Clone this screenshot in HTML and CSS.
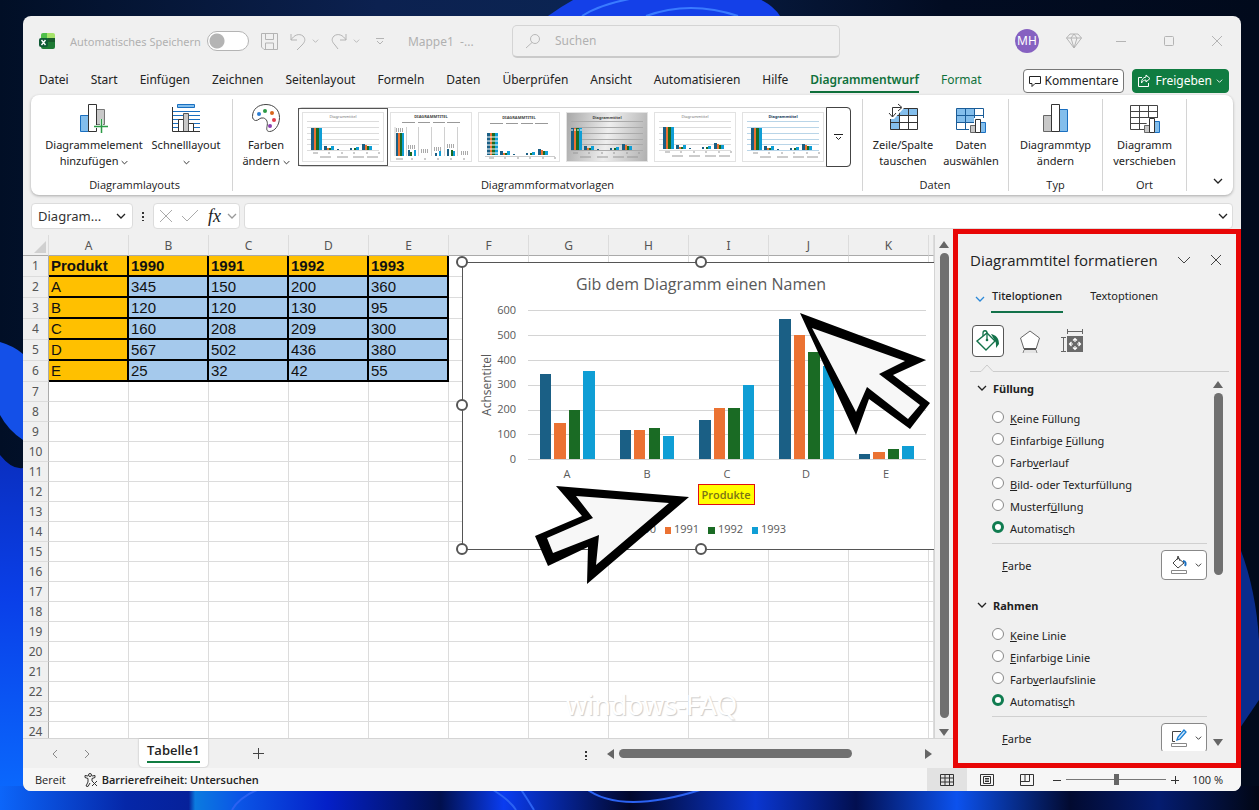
FILE: index.html
```html
<!DOCTYPE html>
<html lang="de">
<head>
	<meta charset="UTF-8">
	<title>Mappe1 - Excel</title>
	<link rel="stylesheet" href="styles.css">
	<script src="script.js" defer></script>
</head>
<body>
	<svg class="wallpaper" viewBox="0 0 1259 810" preserveAspectRatio="none" aria-hidden="true">
		<defs>
			<linearGradient id="sky" x1="0" x2="1">
				<stop offset="0" stop-color="#010f26"/>
				<stop offset=".3" stop-color="#0c2150"/>
				<stop offset=".45" stop-color="#0b2452"/>
				<stop offset=".75" stop-color="#020c22"/>
				<stop offset="1" stop-color="#010a1c"/>
			</linearGradient>
			<linearGradient id="left" x1="0" y1="0" x2="0" y2="1">
				<stop offset="0" stop-color="#0a2fc0"/>
				<stop offset=".4" stop-color="#0a3fe8"/>
				<stop offset="1" stop-color="#0a6cff"/>
			</linearGradient>
			<linearGradient id="floor" x1="0" x2="1">
				<stop offset="0" stop-color="#0c66fa"/>
				<stop offset=".1" stop-color="#0527a8"/>
				<stop offset=".15" stop-color="#06219a"/>
				<stop offset=".155" stop-color="#0b7be0"/>
				<stop offset=".19" stop-color="#0b55e6"/>
				<stop offset=".26" stop-color="#0420c8"/>
				<stop offset=".35" stop-color="#01104e"/>
				<stop offset=".4" stop-color="#0a3cf0"/>
				<stop offset=".5" stop-color="#01072c"/>
				<stop offset=".6" stop-color="#0a36d0"/>
				<stop offset=".68" stop-color="#020f50"/>
				<stop offset=".76" stop-color="#0c52ee"/>
				<stop offset=".85" stop-color="#020a30"/>
				<stop offset=".92" stop-color="#041c70"/>
				<stop offset="1" stop-color="#010614"/>
			</linearGradient>
		</defs>
		<rect width="1259" height="810" fill="url(#sky)"/>
		<path d="M548 16Q570 0 590-8H740Q770 0 780 16Z" fill="#1440e8"/>
		<path d="M582 16Q610-2 670-6M646 16Q690 0 738 16" fill="none" stroke="#3a7bff" stroke-width="2"/>
		<path d="M0 342Q14 346 23 354V440Q8 430 0 415Z" fill="#1450e8"/>
		<path d="M0 455Q12 470 23 468V810H0Z" fill="url(#left)"/>
		<path d="M1240 548Q1256 590 1259 640V700L1240 728Z" fill="#0a2c8c"/>
		<rect y="786" width="1259" height="24" fill="url(#floor)"/>
		<path d="M490 788Q510 800 516 810M520 788Q528 800 534 810M585 788Q620 815 700 790M232 810Q240 796 262 788" fill="none" stroke="#2b62f2" stroke-width="2"/>
	</svg>

	<svg class="sprite" aria-hidden="true">
		<symbol id="chev" viewBox="0 0 10 6"><path d="M1 1l4 4 4-4" fill="none" stroke="currentColor" stroke-width="1.300"/></symbol>
		<symbol id="thumb-bars" viewBox="0 0 80 48">
			<g fill="#1a5f85"><path d="M4 15h3v22H4zM17 33h3v4h-3zM30 36h2v1h-2zM43 35h2v2h-2zM55 31h3v6h-3z"/></g>
			<g fill="#eb7232"><path d="M7 15h2v22H7zM20 35h2v2h-2zM58 32h2v5h-2z"/></g>
			<g fill="#1a6b24"><path d="M9 15h3v22H9zM22 35h2v2h-2zM47 35h2v2h-2zM60 33h2v4h-2z"/></g>
			<g fill="#0f9ed5"><path d="M12 15h3v22h-3zM24 33h3v4h-3zM49 34h3v3h-3zM62 33h3v4h-3z"/></g>
			<path d="M6 40h5M21 40h2M34 40h2M46 40h2M59 40h2M71 40h2M13 44h11M30 44h11M46 44h11M60 44h11" stroke="#999"/>
		</symbol>
		<symbol id="thumb-lines" viewBox="0 0 80 48"><path d="M4 8.500h72M4 14.500h72M4 20.500h72M4 26.500h72M4 31.500h72M4 37.500h72" stroke="currentColor"/></symbol>
	</svg>

	<main class="window">
		<header class="titlebar">
			<div class="title-left">
				<svg class="logo" viewBox="0 0 16 16" width="16" height="16"><path d="M2 2a2 2 0 012-2h5v6H2z" fill="#4fbf4a"/><path d="M8 0h6a2 2 0 012 2v4H8z" fill="#a5e36a"/><path d="M2 5h14v9a2 2 0 01-2 2H4a2 2 0 01-2-2z" fill="#1e7a34"/><path d="M9 5h7v4H9z" fill="#185c2c"/><rect y="5" width="9" height="9" rx="2" fill="#0f5a35"/><path d="M2.500 7l4 5m0-5l-4 5" stroke="#fff" stroke-width="1.400"/></svg>
				<label class="autosave">Automatisches Speichern <input type="checkbox" class="toggle"></label>
				<button class="tool" aria-label="Speichern"><svg viewBox="0 0 17 17" width="17" height="17"><path d="M.5.5h16v16H3l-2.500-2.500zM4.500.5v6h8v-6M4.500 16v-6h8v6"/></svg></button>
				<button class="tool undo" aria-label="Rückgängig"><svg viewBox="0 0 16 17" width="16" height="17"><path d="M1 1v6h6M1 7c3-5 8-7 12-4 3 3 2 6-1 9l-5 5"/></svg><svg class="c" width="7" height="4"><use href="#chev"/></svg></button>
				<button class="tool undo" aria-label="Wiederholen"><svg viewBox="0 0 16 17" width="16" height="17"><path d="M15 1v6H9M15 7c-3-5-8-7-12-4-3 3-2 6 1 9l3 4"/></svg><svg class="c" width="7" height="4"><use href="#chev"/></svg></button>
				<button class="tool more-tools" aria-label="Symbolleiste anpassen"><svg viewBox="0 0 8 7" width="8" height="7"><path d="M0 .5h8M1 3l3 3 3-3"/></svg></button>
				<span class="doc-name">Mappe1&nbsp; -...</span>
			</div>
			<label class="search">
				<svg viewBox="0 0 16 16" width="16" height="16"><circle cx="10" cy="6" r="4.500"/><path d="M7 9.500L1 15"/></svg>
				<input type="text" placeholder="Suchen" aria-label="Suchen">
			</label>
			<div class="title-right">
				<span class="avatar">MH</span>
				<button class="tool gem" aria-label="Premium"><svg viewBox="0 0 16 16" width="16" height="16"><path d="M4 1h8l3.500 4L8 15 .5 5zM.5 5h15M8 1L5 5l3 10 3-10z"/></svg></button>
				<button class="tool" aria-label="Minimieren"><svg viewBox="0 0 12 12" width="12" height="12"><path d="M1 6.500h10"/></svg></button>
				<button class="tool" aria-label="Maximieren"><svg viewBox="0 0 12 12" width="12" height="12"><rect x="1.500" y="1.500" width="9" height="9" rx="1"/></svg></button>
				<button class="tool" aria-label="Schließen"><svg viewBox="0 0 12 12" width="12" height="12"><path d="M1 1l10 10M11 1L1 11"/></svg></button>
			</div>
		</header>

		<nav class="tabs">
			<a href="#">Datei</a>
			<a href="#">Start</a>
			<a href="#">Einfügen</a>
			<a href="#">Zeichnen</a>
			<a href="#">Seitenlayout</a>
			<a href="#">Formeln</a>
			<a href="#">Daten</a>
			<a href="#">Überprüfen</a>
			<a href="#">Ansicht</a>
			<a href="#">Automatisieren</a>
			<a href="#">Hilfe</a>
			<a href="#" class="active">Diagrammentwurf</a>
			<a href="#" class="context">Format</a>
			<div class="actions">
				<button class="comments"><svg viewBox="0 0 12 12" width="12" height="12"><path d="M.5 1.500h11v7H6l-3 3v-3H.5z"/></svg>Kommentare</button>
				<button class="share"><svg viewBox="0 0 13 13" width="13" height="13"><path d="M4 3.500H.5v9h10V9M8 1l4 3.500L8 8V6C6 6 4.500 7 3.500 9 3.500 5.500 5 3.500 8 3z"/></svg>Freigeben <svg width="7" height="4"><use href="#chev"/></svg></button>
			</div>
		</nav>

		<section class="ribbon">
			<div class="group layouts">
				<div class="buttons">
					<button class="big wide">
						<svg viewBox="0 0 30 30" width="30" height="30"><path d="M1.500 12.500h8v16h-8z" fill="#83beec" stroke="#1a6fc0"/><path d="M17.500 6.500h8v15h-8z" fill="#c8c8c8" stroke="#777"/><path d="M9.500 1.500h8v27h-8z" fill="#fff" stroke="#333"/><path d="M22.500 16v14M15 23.500h14" stroke="#fff" stroke-width="3"/><path d="M22.500 16v14M15 23.500h14" stroke="#2c9a46" stroke-width="1.500"/></svg>
						<span>Diagrammelement</span>
						<span>hinzufügen <svg class="c" width="7" height="5"><use href="#chev"/></svg></span>
					</button>
					<button class="big">
						<svg viewBox="0 0 30 30" width="30" height="30"><path d="M6.500 1.500h17v3h-17z" fill="#83beec" stroke="#1a6fc0"/><path d="M2 8.500h27M2 12.500h27M2 16.500h27M2 20.500h27M2 24.500h27" stroke="#1a6fc0"/><path d="M7.500 16.500h5v12h-5zM17.500 20.500h5v8h-5z" fill="#fff" stroke="#333"/><path d="M12.500 10.500h5v18h-5z" fill="#c8c8c8" stroke="#555"/><path d="M1.500 4v24.500H29" fill="none" stroke="#333"/></svg>
						<span>Schnelllayout</span>
						<span><svg class="c" width="7" height="5"><use href="#chev"/></svg></span>
					</button>
				</div>
				<h2>Diagrammlayouts</h2>
			</div>
			<div class="group styles">
				<div class="buttons">
					<button class="big narrow">
						<svg viewBox="0 0 30 30" width="30" height="30"><path d="M15 1.500c8 0 13.500 5.500 13.500 13 0 8-5 14-10 14-3 0-3-2.500-2.500-5 1-4 0-7.500-3.500-8.500-4-1-5 3-8 2.500-2-.5-3-2-3-4C1.500 6 7.500 1.500 15 1.500z" fill="#fff" stroke="#444"/><circle cx="8" cy="11" r="2" fill="#2b7cd3"/><circle cx="14" cy="8" r="2" fill="#2c9a46"/><circle cx="21" cy="10" r="2" fill="#d8661c"/><circle cx="23" cy="17" r="2" fill="#e03c4c"/><circle cx="19" cy="23" r="2" fill="#8c3fb0"/></svg>
						<span>Farben</span>
						<span>ändern <svg class="c" width="7" height="5"><use href="#chev"/></svg></span>
					</button>
					<div class="gallery">
						<button class="thumb selected" aria-label="Formatvorlage 1"><svg viewBox="0 0 80 48"><use href="#thumb-lines" color="#dcdcdc"/><g transform="translate(4 0)"><use href="#thumb-bars" width="80" height="48"/></g><text x="40" y="5" class="t">Diagrammtitel</text></svg></button>
						<button class="thumb" aria-label="Formatvorlage 2"><svg viewBox="0 0 80 48"><path d="M4 14v29M15.500 14v29M27.500 14v29M40.500 14v29M53.500 14v29M66.500 14v29" stroke="#d0d0d0"/><path d="M6 20v23" stroke="#1a5f85" stroke-width="2"/><path d="M8 20v23" stroke="#eb7232" stroke-width="2"/><path d="M10 20v23" stroke="#1a6b24" stroke-width="2"/><path d="M12 20v23" stroke="#0f9ed5" stroke-width="2"/><path d="M18 37v6M45 40v3M57 36v7" stroke="#1a5f85" stroke-width="2"/><path d="M20 39v4M61 37v6" stroke="#1a6b24" stroke-width="2"/><path d="M24 37v6M49 38v5M63 38v5" stroke="#0f9ed5" stroke-width="2"/><path d="M5 17h8M17 34h8M30 38h8M43 36h8M56 33h8M70 40h7" stroke="#aaa" stroke-width="4" stroke-dasharray="1 1"/><path d="M11 9.500h13M27 9.500h12M42 9.500h12M56 9.500h13M5 46h7M20 46h2M33 46h2M46 46h2M59 46h2M72 46h2" stroke="#999"/><text x="40" y="5" class="t b">DIAGRAMMTITEL</text></svg></button>
						<button class="thumb" aria-label="Formatvorlage 3"><svg viewBox="0 0 80 48"><g transform="translate(4 5)"><use href="#thumb-bars" width="80" height="48"/></g><path d="M7 24h14M7 28h14M7 32h14M7 36h14M7 40h14" stroke="#fff"/><path d="M6 43.500h70" stroke="#ccc"/><path d="M11 10.500h13M27 10.500h12M42 10.500h12M56 10.500h13" stroke="#999"/><text x="40" y="6" class="t b">DIAGRAMMTITEL</text></svg></button>
						<button class="thumb dark" aria-label="Formatvorlage 4"><svg viewBox="0 0 80 48"><use href="#thumb-lines" color="#aaa"/><use href="#thumb-bars"/><path d="M4 17h11" stroke="#fff" stroke-dasharray="2 1"/><text x="40" y="6" class="t b">Diagrammtitel</text></svg></button>
						<button class="thumb" aria-label="Formatvorlage 5"><svg viewBox="0 0 80 48"><use href="#thumb-lines" color="#dcdcdc"/><g transform="translate(4 -1)"><use href="#thumb-bars" width="80" height="48"/></g><text x="40" y="5" class="t">Diagrammtitel</text></svg></button>
						<button class="thumb" aria-label="Formatvorlage 6"><svg viewBox="0 0 80 48"><use href="#thumb-lines" color="#b9d5e8"/><g transform="translate(4 0)"><use href="#thumb-bars" width="80" height="48"/></g><text x="40" y="5" class="t b navy">Diagrammtitel</text></svg></button>
						<button class="gallery-more" aria-label="Weitere"><svg viewBox="0 0 9 7" width="9" height="7"><path d="M0 .5h9M2 3l2.500 2.500L7 3" fill="none" stroke="#222"/></svg></button>
					</div>
				</div>
				<h2>Diagrammformatvorlagen</h2>
			</div>
			<div class="group data-group">
				<div class="buttons">
					<button class="big">
						<svg viewBox="0 0 30 30" width="30" height="30"><path d="M2.500 5.500h27v21h-27z" fill="#fff"/><path d="M2.500 5.500h27v7h-18v14h-9z" fill="#83beec"/><path d="M2.500 5.500h27v21h-27zM11.500 5.500v21M20.500 5.500v21M2.500 12.500h27M2.500 19.500h27" fill="none" stroke="#333"/><path d="M0 0h16v5L6 16H0z" fill="#fff"/><path d="M13 4.500H4.500V14M10 1l4 3.500L10 8M1 10l3.500 4L8 10" fill="none" stroke="#333"/></svg>
						<span>Zeile/Spalte</span>
						<span>tauschen</span>
					</button>
					<button class="big narrow">
						<svg viewBox="0 0 30 30" width="30" height="30"><path d="M.5 5.500h27v21H.5z" fill="#fff"/><path d="M.5 5.500h18v14H.5z" fill="#83beec"/><path d="M.5 5.500h27v21H.5zM9.500 5.500v21M18.500 5.500v21M.5 12.500h27M.5 19.500h27" fill="none" stroke="#1a5c98"/><path d="M13 21h5v-6h12v15H13z" fill="#fff"/><path d="M14.500 22.500h5v7h-5z" fill="#c8c8c8" stroke="#666"/><path d="M24.500 19.500h5v10h-5z" fill="#83beec" stroke="#1a6fc0"/><path d="M19.500 16.500h5v13h-5z" fill="#fff" stroke="#333"/></svg>
						<span>Daten</span>
						<span>auswählen</span>
					</button>
				</div>
				<h2>Daten</h2>
			</div>
			<div class="group type">
				<div class="buttons">
					<button class="big">
						<svg viewBox="0 0 30 30" width="30" height="30"><path d="M2.500 12.500h8v16h-8z" fill="#c8c8c8" stroke="#666"/><path d="M18.500 6.500h8v22h-8z" fill="#83beec" stroke="#1a6fc0"/><path d="M10.500 1.500h8v27h-8z" fill="#fff" stroke="#333"/></svg>
						<span>Diagrammtyp</span>
						<span>ändern</span>
					</button>
				</div>
				<h2>Typ</h2>
			</div>
			<div class="group place">
				<div class="buttons">
					<button class="big">
						<svg viewBox="0 0 30 30" width="30" height="30"><path d="M.5 2.500h27v18L20 26.500H.5zM9.500 2.500v24M18.500 2.500v18M.5 8.500h27M.5 14.500h27M.5 20.500h18" fill="#fff" stroke="#444"/><path d="M11 27h4l3-12h12v15H11z" fill="#fff"/><path d="M14.500 22.500h5v7h-5z" fill="#c8c8c8" stroke="#666"/><path d="M24.500 18.500h5v11h-5z" fill="#83beec" stroke="#1a6fc0"/><path d="M19.500 15.500h5v14h-5z" fill="#fff" stroke="#333"/></svg>
						<span>Diagramm</span>
						<span>verschieben</span>
					</button>
				</div>
				<h2>Ort</h2>
			</div>
			<button class="collapse" aria-label="Menüband reduzieren"><svg width="10" height="6"><use href="#chev"/></svg></button>
		</section>

		<section class="formula-bar">
			<div class="name-box">
				<select aria-label="Namenfeld"><option>Diagram...</option></select>
				<svg width="10" height="6"><use href="#chev"/></svg>
			</div>
			<span class="dots"></span>
			<div class="fx-box">
				<button aria-label="Abbrechen"><svg viewBox="0 0 12 12" width="12" height="12"><path d="M0 0l12 12M12 0L0 12" stroke="#aaa"/></svg></button>
				<button aria-label="Eingeben"><svg viewBox="0 0 16 12" width="16" height="12"><path d="M0 6l5 5L16 0" fill="none" stroke="#aaa"/></svg></button>
				<button class="fx" aria-label="Funktion einfügen">fx</button>
				<button aria-label="Mehr"><svg class="pale" width="10" height="6"><use href="#chev"/></svg></button>
			</div>
			<div class="formula">
				<input type="text" aria-label="Bearbeitungsleiste">
				<svg width="10" height="6"><use href="#chev"/></svg>
			</div>
		</section>

		<div class="work">
			<section class="book">
				<div class="sheet-row">
					<div class="sheet">
						<table>
							<colgroup><col class="num"><col span="11" class="letter"><col></colgroup>
							<thead>
								<tr><th class="corner"><svg viewBox="0 0 12 12" width="12" height="12"><path d="M12 0v12H0z" fill="#d0d0d0"/></svg></th><th>A</th><th>B</th><th>C</th><th>D</th><th>E</th><th>F</th><th>G</th><th>H</th><th>I</th><th>J</th><th>K</th><th></th></tr>
							</thead>
							<tbody id="rows">
								<tr class="data head"><th>1</th><td>Produkt</td><td>1990</td><td>1991</td><td>1992</td><td>1993</td></tr>
								<tr class="data"><th>2</th><td>A</td><td>345</td><td>150</td><td>200</td><td>360</td></tr>
								<tr class="data"><th>3</th><td>B</td><td>120</td><td>120</td><td>130</td><td>95</td></tr>
								<tr class="data"><th>4</th><td>C</td><td>160</td><td>208</td><td>209</td><td>300</td></tr>
								<tr class="data"><th>5</th><td>D</td><td>567</td><td>502</td><td>436</td><td>380</td></tr>
								<tr class="data"><th>6</th><td>E</td><td>25</td><td>32</td><td>42</td><td>55</td></tr>
							</tbody>
						</table>

						<svg class="chart" viewBox="455 255 500 335" width="500" height="335">
							<rect x="462.500" y="262.500" width="479" height="287" fill="#fff" stroke="#555"/>
							<path d="M528 310.500h398M528 335.500h398M528 360.500h398M528 385.500h398M528 410.500h398M528 434.500h398M528 459.500h398" stroke="#d4d4d4"/>
							<path fill="#1a5f85" d="M540 374h11v85h-11zM620 430h11v29h-11zM699 420h12v39h-12zM779 319h12v140h-12zM859 454h11v5h-11z"/>
							<path fill="#eb7232" d="M554 423h12v36h-12zM634 430h11v29h-11zM714 408h11v51h-11zM794 335h11v124h-11zM873 452h12v7h-12z"/>
							<path fill="#1a6b24" d="M569 410h11v49h-11zM649 428h11v31h-11zM728 408h12v51h-12zM808 352h12v107h-12zM888 449h11v10h-11z"/>
							<path fill="#0f9ed5" d="M583 371h12v88h-12zM663 436h11v23h-11zM743 385h11v74h-11zM823 366h11v93h-11zM902 446h12v13h-12z"/>
							<text class="chart-title" x="701" y="290">Gib dem Diagramm einen Namen</text>
							<g class="y-axis">
								<text x="516" y="314">600</text><text x="516" y="339">500</text><text x="516" y="364">400</text><text x="516" y="388">300</text><text x="516" y="413">200</text><text x="516" y="438">100</text><text x="516" y="463">0</text>
							</g>
							<g class="x-axis">
								<text x="567" y="478">A</text><text x="647" y="478">B</text><text x="727" y="478">C</text><text x="806" y="478">D</text><text x="886" y="478">E</text>
								<text transform="translate(491 385) rotate(-90)" class="value-title">Achsentitel</text>
							</g>
							<rect x="698.500" y="484.500" width="56" height="20" fill="#ff0" stroke="#e01010"/>
							<text class="axis-title" x="726" y="499">Produkte</text>
							<path fill="#1a5f85" d="M621 527h7v7h-7z"/><path fill="#eb7232" d="M665 527h6v7h-6z"/><path fill="#1a6b24" d="M708 527h7v7h-7z"/><path fill="#0f9ed5" d="M752 527h6v7h-6z"/>
							<g class="legend">
								<text x="631" y="533">1990</text><text x="674" y="533">1991</text><text x="718" y="533">1992</text><text x="761" y="533">1993</text>
							</g>
							<g fill="#fff" stroke="#555" stroke-width="2"><circle cx="462" cy="262" r="5"/><circle cx="701" cy="262" r="5"/><circle cx="462" cy="405" r="5"/><circle cx="462" cy="549" r="5"/><circle cx="701" cy="549" r="5"/></g>
							<path d="M800 313L926 360 893 375 930 403 910 429 869 399 856 435z"/>
							<path d="M812 328L905 361 879 374 920 405 908 419 867 387 856 412z" fill="#f7f7f7"/>
							<path d="M689 497L556 486 582 516 535 536 548 566 588 547 587 584z"/>
							<path d="M669 503L576 496 593 518 547 538 553 553 599 535 596 565z" fill="#f7f7f7"/>
						</svg>
						<span class="watermark">windows-FAQ</span>
					</div>
					<div class="vscroll"><i class="up"></i><i class="bar"></i><i class="down"></i></div>
				</div>
				<div class="sheet-tabs">
					<button class="step" aria-label="Vorheriges Blatt"><svg viewBox="0 0 6 10" width="6" height="10"><path d="M5 1L1 5l4 4"/></svg></button>
					<button class="step" aria-label="Nächstes Blatt"><svg viewBox="0 0 6 10" width="6" height="10"><path d="M1 1l4 4-4 4"/></svg></button>
					<a href="#" class="sheet-tab"><span>Tabelle1</span></a>
					<button class="add" aria-label="Neues Blatt"><svg viewBox="0 0 11 11" width="11" height="11"><path d="M5.500 0v11M0 5.500h11"/></svg></button>
					<span class="dots"></span>
					<div class="hscroll"><i class="back"></i><i class="bar"></i><i class="forth"></i></div>
				</div>
			</section>

			<aside class="pane">
				<div class="pane-head">
					<h1>Diagrammtitel formatieren</h1>
					<button aria-label="Optionen"><svg viewBox="0 0 14 8" width="14" height="8"><path d="M1 1l6 6 6-6"/></svg></button>
					<button aria-label="Bereich schließen"><svg viewBox="0 0 12 12" width="12" height="12"><path d="M1 1l10 10M11 1L1 11"/></svg></button>
				</div>
				<div class="pane-tabs">
					<svg class="blue" width="10" height="6"><use href="#chev"/></svg>
					<a href="#" class="active">Titeloptionen</a>
					<a href="#">Textoptionen</a>
				</div>
				<div class="pane-icons">
					<button class="on" aria-label="Füllung und Linie"><svg viewBox="0 0 26 26" width="26" height="26"><path d="M12 5l8 8-9 9-9-9z" fill="#fff" stroke="#13724a" stroke-width="1.400"/><path d="M8 8V5c0-3 4-3 4 0v7" fill="none" stroke="#13724a" stroke-width="1.300"/><circle cx="12" cy="12" r="1.300" fill="#13724a"/><path d="M16 6c5 1 8 4 8 10l-3 4c0-4 0-6-1-7z" fill="#13724a"/></svg></button>
					<button aria-label="Effekte"><svg viewBox="0 0 26 26" width="26" height="26"><path d="M13 3l9.500 7L19 21H7L3.500 10z" fill="#fff" stroke="#666"/><path d="M8 21h10l2 4H6z" fill="#e4e4e4"/><path d="M7 21h12" stroke="#555" stroke-width="2"/><path d="M7 22l-1 3M19 22l1 3" stroke="#888"/></svg></button>
					<button aria-label="Größe und Eigenschaften"><svg viewBox="0 0 26 26" width="26" height="26"><path d="M8 8h16v16H8z" fill="#6a6a6a"/><path d="M8 3.500h15M8.500 1v5M23.500 1v5M4.500 9v14M2 9.500h5M2 23.500h5" stroke="#666" fill="none"/><path d="M16 11v3M16 18v3M11 16h3M18 16h3M14 12.500L16 10.500l2 2M14 19.500l2 2 2-2M12.500 14L10.500 16l2 2M19.500 14l2 2-2 2" stroke="#fff" stroke-width="1.200" fill="none"/></svg></button>
				</div>
				<div class="notch"><svg viewBox="0 0 34 10" width="34" height="10"><path d="M0 9.500h11L17 3l6 6.500h11" fill="none" stroke="#ccc"/></svg><i></i></div>
				<div class="pane-body">
					<form class="options">
						<section>
							<h2><svg width="10" height="6"><use href="#chev"/></svg>Füllung</h2>
							<div class="radios">
								<label><input type="radio" name="fill"><span><u>K</u>eine Füllung</span></label>
								<label><input type="radio" name="fill"><span>Einfarbige <u>F</u>üllung</span></label>
								<label><input type="radio" name="fill"><span>Farb<u>v</u>erlauf</span></label>
								<label><input type="radio" name="fill"><span><u>B</u>ild- oder Texturfüllung</span></label>
								<label><input type="radio" name="fill"><span>Musterf<u>ü</u>llung</span></label>
								<label><input type="radio" name="fill" checked><span>Automatis<u>c</u>h</span></label>
							</div>
							<div class="color-row"><label for="fillColor"><u>F</u>arbe</label>
								<button type="button" id="fillColor"><svg viewBox="0 0 18 18" width="18" height="18"><path d="M8 2l6 5-6 5-5-5zM7 4l1-4 2 5" fill="#fff" stroke="#444"/><path d="M13 5c3 0 3 3 2 5" fill="none" stroke="#1a6fc0" stroke-width="2"/><path d="M1.500 14.500h15v3h-15z" fill="#fff" stroke="#888"/></svg><svg width="7" height="4"><use href="#chev"/></svg></button></div>
						</section>
						<section>
							<h2><svg width="10" height="6"><use href="#chev"/></svg>Rahmen</h2>
							<div class="radios">
								<label><input type="radio" name="line"><span><u>K</u>eine Linie</span></label>
								<label><input type="radio" name="line"><span><u>E</u>infarbige Linie</span></label>
								<label><input type="radio" name="line"><span>Farb<u>v</u>erlaufslinie</span></label>
								<label><input type="radio" name="line" checked><span>Automatis<u>c</u>h</span></label>
							</div>
							<div class="color-row"><label for="lineColor"><u>F</u>arbe</label>
								<button type="button" id="lineColor"><svg viewBox="0 0 18 18" width="18" height="18"><path d="M11 2.500H2.500v10H5" fill="none" stroke="#444"/><path d="M7 11l1-3 6-7 2 2-6 7z" fill="#cfe6fa" stroke="#1a7fd4" stroke-width="1.300"/><path d="M1.500 14.500h15v3h-15z" fill="#fff" stroke="#888"/></svg><svg width="7" height="4"><use href="#chev"/></svg></button></div>
						</section>
					</form>
					<div class="vscroll"><i class="up"></i><i class="bar"></i><i class="down"></i></div>
				</div>
			</aside>
		</div>

		<footer class="status">
			<span>Bereit</span>
			<svg viewBox="0 0 14 14" width="14" height="14"><g fill="none" stroke="#333"><circle cx="6" cy="2" r="1.500"/><path d="M4 3L1 2.500v2l3 1V9l-2 4 2 .5L6 10M8 3l3-.5v2L8 5.500V8M8 8l5 5M13 8l-5 5"/></g></svg>
			<b>Barrierefreiheit: Untersuchen</b>
			<div class="views">
				<button class="on" aria-label="Normal"><svg viewBox="0 0 14 14" width="14" height="14"><path d="M.5 1.500h13v11H.5zM5 1v12M9.500 1v12M.5 5h13M.5 9h13"/></svg></button>
				<button aria-label="Seitenlayout"><svg viewBox="0 0 14 14" width="14" height="14"><path d="M.5 1.500h13v11H.5zM3.500 3.500h7v7h-7zM5 5.500h4M5 7h4M5 8.500h4"/></svg></button>
				<button aria-label="Umbruchvorschau"><svg viewBox="0 0 14 14" width="14" height="14"><path d="M.5 1.500h13v11H.5zM.5 8.500h9v-7M5 1v7"/></svg></button>
			</div>
			<div class="zoom">
				<button aria-label="Verkleinern"><svg viewBox="0 0 8 8" width="8" height="8"><path d="M0 4.500h8"/></svg></button>
				<input type="range" min="0" max="100" value="50" aria-label="Zoom">
				<button aria-label="Vergrößern"><svg viewBox="0 0 8 8" width="8" height="8"><path d="M0 4.500h8M4.500 0v8"/></svg></button>
				<span>100 %</span>
			</div>
		</footer>
	</main>
</body>
</html>
```
FILE: styles.css
```css
*{
	box-sizing: border-box;
}
body{
	margin: 0;
	height: 100vh;
	padding: 16px 18px 19px 23px;
	font-family: "Noto Sans", "Open Sans", sans-serif;
	font-size: 12px;
	color: #222;
	background-color: #010a20;
	overflow: hidden;
}
h1, h2{
	margin: 0;
	font-weight: normal;
}
a{
	color: inherit;
	text-decoration: none;
}
button{
	margin: 0;
	padding: 0;
	border: none;
	background: none;
	font: inherit;
	color: inherit;
	display: flex;
	align-items: center;
	justify-content: center;
}
svg{
	flex: none;
}
.wallpaper{
	position: absolute;
	left: 0;
	top: 0;
	width: 100%;
	height: 100%;
	z-index: -1;
}
.sprite{
	position: absolute;
	width: 0;
	height: 0;
}
.window{
	display: flex;
	flex-direction: column;
	height: 100%;
	background-color: #f0f0f0;
	border-radius: 8px;
}

/* title bar */
.titlebar{
	display: flex;
	align-items: center;
	height: 50px;
	padding: 0 18px 0 16px;
	color: #b0b0b0;
}
.title-left{
	display: flex;
	align-items: center;
	flex: 0 1 473px;
}
.autosave{
	display: flex;
	align-items: center;
	gap: 6px;
	margin: 0 12px 0 15px;
	font-size: 11px;
	white-space: nowrap;
}
.toggle{
	appearance: none;
	margin: 0;
	width: 42px;
	height: 20px;
	border: 1px solid #b4b4b4;
	border-radius: 10px;
	background: radial-gradient(circle at 9px 9px, #b4b4b4 7px, #fff 8px);
}
.tool svg{
	fill: none;
	stroke: #b4b4b4;
}
.undo{
	gap: 6px;
	margin-left: 12px;
}
.tool .c{
	color: #b4b4b4;
}
.more-tools{
	margin-left: 16px;
}
.doc-name{
	margin-left: 24px;
	white-space: nowrap;
}
.search{
	display: flex;
	align-items: center;
	gap: 12px;
	flex: 0 1 328px;
	height: 33px;
	padding: 0 12px;
	border: 1px solid #d4d4d4;
	border-bottom: 2px solid #cacaca;
	border-radius: 5px;
}
.search svg{
	fill: none;
	stroke: #b8b8b8;
}
.search input{
	flex: 1;
	min-width: 0;
	border: none;
	background: none;
	font: inherit;
}
.search input::placeholder{
	color: #b0b0b0;
}
.title-right{
	display: flex;
	align-items: center;
	margin-left: auto;
	gap: 36px;
}
.title-right .avatar{
	width: 24px;
	height: 24px;
	margin-right: -9px;
	border-radius: 50%;
	background-color: #8661c1;
	color: #fff;
	line-height: 24px;
	text-align: center;
}
.gem{
	margin-right: -3px;
}

/* ribbon tabs */
.tabs{
	display: flex;
	align-items: center;
	gap: 22px;
	height: 29px;
	padding: 0 12px 0 16px;
	white-space: nowrap;
}
.tabs a{
	line-height: 22px;
	padding-top: 1px;
	border-bottom: 2px solid transparent;
}
.tabs .active{
	color: #0f703b;
	border-color: #0f703b;
	font-weight: 600;
}
.tabs .context{
	color: #0f703b;
}
.actions{
	display: flex;
	gap: 8px;
	margin-left: auto;
}
.actions button{
	height: 24px;
	gap: 4px;
	padding: 0 5px;
	border: 1px solid #777;
	border-radius: 4px;
	background-color: #fff;
}
.actions button svg{
	fill: none;
	stroke: currentColor;
}
.actions .share{
	background-color: #107c41;
	border-color: #107c41;
	color: #fff;
}

/* ribbon */
.ribbon{
	display: flex;
	height: 100px;
	margin: 0 8px;
	padding: 4px 0;
	background-color: #fff;
	border-radius: 8px;
	box-shadow: 0 1px 3px rgba(0,0,0,.3);
	font-size: 11px;
}
.group{
	display: flex;
	flex-direction: column;
	justify-content: space-between;
	border-right: 1px solid #d4d4d4;
	padding: 4px 3px 0;
}
.group h2{
	font-family: "Open Sans", sans-serif;
	font-size: 11px;
	line-height: 12px;
	text-align: center;
}
.buttons{
	display: flex;
}
.layouts{
	flex: 0 1 202px;
	padding-left: 9px;
}
.styles{
	flex: 0 1 630px;
}
.data-group{
	flex: 0 1 146px;
	padding-left: 2px;
}
.type{
	flex: 0 1 94px;
}
.place{
	flex: 0 1 84px;
}
.type, .place{
	align-items: center;
}
.big{
	flex-direction: column;
	justify-content: flex-start;
	width: 76px;
	line-height: 16px;
	white-space: nowrap;
}
.big > svg{
	margin-bottom: 4px;
}
.big .c{
	vertical-align: middle;
}
.wide{
	width: 108px;
}
.narrow{
	width: 60px;
}
.gallery{
	display: flex;
	align-items: center;
	height: 60px;
	margin: 4px 0 0 2px;
	border: 1px solid #d4d4d4;
	border-radius: 4px;
}
.thumb{
	width: 88px;
	height: 56px;
}
.thumb svg{
	width: 80px;
	height: 48px;
	outline: 1px solid #e2e2e2;
	background-color: #fff;
}
.selected{
	outline: 1px solid #555;
}
.dark svg{
	background: linear-gradient(100deg, #a8a8a8, #eee 50%, #b0b0b0);
}
.t{
	font-size: 4px;
	text-anchor: middle;
	fill: #777;
}
.b{
	font-weight: bold;
	fill: #444;
}
.navy{
	fill: #1a3c5c;
}
.gallery-more{
	align-self: stretch;
	width: 25px;
	margin: -1px;
	border: 1px solid #444;
	border-radius: 0 4px 4px 0;
}
.collapse{
	margin: auto 10px 7px auto;
}

/* formula bar */
.formula-bar{
	display: flex;
	align-items: center;
	height: 26px;
	margin: 8px 8px 0;
}
.name-box, .fx-box, .formula{
	display: flex;
	align-items: center;
	height: 26px;
	background-color: #fff;
	border: 1px solid #dcdcdc;
	border-radius: 4px;
}
.name-box{
	width: 102px;
	padding: 0 6px;
}
.name-box select, .formula input{
	flex: 1;
	min-width: 0;
	appearance: none;
	border: none;
	background: none;
	font: inherit;
	font-size: 13px;
	color: #333;
	outline: none;
}
.dots{
	width: 2px;
	height: 10px;
	background: radial-gradient(circle, #333 1px, transparent 1px) 0 0 / 2px 4px;
}
.formula-bar .dots{
	margin: 0 9px;
}
.fx-box{
	width: 87px;
	gap: 10px;
	padding: 0 2px 0 6px;
}
.fx{
	font-family: "Liberation Serif", serif;
	font-size: 18px;
	font-style: italic;
	color: #222;
}
.pale{
	color: #999;
}
.fx-box button:last-child{
	margin-left: -4px;
}
.formula{
	flex: 1;
	margin-left: 4px;
	padding: 0 4px;
}

/* sheet */
.work{
	display: flex;
	flex: 1;
	min-height: 0;
}
.book{
	display: flex;
	flex-direction: column;
	flex: 1;
	min-width: 0;
}
.sheet-row{
	display: flex;
	flex: 1;
	min-height: 0;
	padding-top: 6px;
}
.sheet{
	flex: 1;
	min-width: 0;
	overflow: hidden;
	position: relative;
	background-color: #fff;
	border-right: 1px solid #d4d4d4;
}
table{
	width: 100%;
	table-layout: fixed;
	border-spacing: 0;
}
.num{
	width: 26px;
}
.letter{
	width: 80px;
}
th, td{
	height: 20px;
	padding: 0;
	border-right: 1px solid #dcdcdc;
	border-bottom: 1px solid #dcdcdc;
}
th{
	background-color: #f0f0f0;
	font-weight: normal;
	line-height: 18px;
	color: #555;
}
thead th{
	height: 21px;
	padding-top: 2px;
	border-bottom-color: #aaa;
}
tbody th{
	border-right-color: #aaa;
}
.corner{
	text-align: right;
	padding-right: 2px;
}
.corner svg{
	vertical-align: middle;
}
.data th, .data td{
	height: 21px;
}
.data td:nth-child(-n+6){
	padding-left: 2px;
	border-right: 2px solid #000;
	border-bottom: 2px solid #000;
	background-color: #a5c9ec;
	font-family: "Liberation Sans", sans-serif;
	font-size: 15px;
	line-height: 19px;
	color: #111;
}
.data.head td:nth-child(-n+6), .data td:nth-child(2){
	background-color: #ffc000;
}
.data.head td:nth-child(-n+6){
	font-weight: bold;
}
.chart{
	position: absolute;
	left: 432px;
	top: 20px;
	font-family: "Open Sans", sans-serif;
}
.chart text{
	font-size: 11px;
	fill: #595959;
}
.chart .chart-title{
	font-size: 16px;
	text-anchor: middle;
}
.y-axis{
	text-anchor: end;
}
.x-axis, .axis-title{
	text-anchor: middle;
}
.chart .value-title{
	font-size: 12px;
}
.chart .axis-title{
	font-weight: 600;
	fill: #7a7216;
}
.watermark{
	position: absolute;
	left: 543px;
	bottom: 15px;
	font-size: 27px;
	color: #fff;
	text-shadow: 1px 1px 1px #ccc;
}
.vscroll{
	display: flex;
	flex-direction: column;
	align-items: center;
	width: 18px;
	padding: 6px 0 2px;
}
.vscroll .bar{
	flex: 1;
	width: 9px;
	margin: 5px 0 11px;
	border-radius: 5px;
	background-color: #707070;
}
.up, .down{
	border: 5px solid transparent;
	border-top: none;
	border-bottom: 7px solid #666;
}
.down{
	transform: rotate(180deg);
}

/* sheet tabs */
.sheet-tabs{
	display: flex;
	align-items: center;
	height: 30px;
	border-top: 1px solid #d4d4d4;
}
.sheet-tabs svg{
	fill: none;
	stroke: #444;
}
.step{
	width: 6px;
	margin-left: 29px;
}
.sheet-tabs .step svg{
	stroke: #888;
}
.step + .step{
	margin-left: 26px;
}
.sheet-tab{
	align-self: flex-start;
	height: 28px;
	margin-left: 49px;
	padding: 1px 8px 0;
	background-color: #fff;
	border-radius: 0 0 4px 4px;
	box-shadow: 0 0 2px rgba(0,0,0,.3);
	font-family: "Open Sans", sans-serif;
	font-weight: 600;
	font-size: 13px;
}
.sheet-tab span{
	display: block;
	line-height: 21px;
	border-bottom: 2px solid #107c41;
}
.add{
	margin-left: 45px;
}
.sheet-tabs .dots{
	margin: 3px 20px 0 auto;
}
.hscroll{
	display: flex;
	align-items: center;
	flex: 0 1 325px;
	margin-right: 21px;
}
.hscroll .bar{
	flex: 0 1 233px;
	height: 9px;
	margin: 0 auto 0 5px;
	border-radius: 5px;
	background-color: #707070;
}
.back, .forth{
	border: 5px solid transparent;
	border-left: none;
	border-right: 7px solid #666;
}
.forth{
	transform: rotate(180deg);
}

/* format pane */
.pane{
	display: flex;
	flex-direction: column;
	width: 288px;
	padding: 0 7px 12px 12px;
	border: 5px solid #e80606;
	background-color: #f0f0f0;
	font-size: 11px;
}
.pane-head{
	display: flex;
	align-items: center;
	height: 51px;
}
.pane-head h1{
	flex: 1;
	font-family: "Open Sans", sans-serif;
	font-size: 15px;
	white-space: nowrap;
}
.pane-head button{
	margin-left: 6px;
	width: 26px;
}
.pane-head svg{
	fill: none;
	stroke: #444;
}
.pane-tabs{
	display: flex;
	align-items: center;
	height: 28px;
	padding-left: 5px;
}
.pane-tabs a{
	height: 28px;
	margin-right: 26px;
	padding: 0 1px;
	line-height: 22px;
	border-bottom: 2px solid transparent;
}
.pane-tabs .active{
	margin-left: 6px;
	font-weight: 500;
	border-color: #13724a;
}
.blue{
	color: #2b88d8;
}
.pane-icons{
	display: flex;
	gap: 10px;
	padding: 12px 2px 5px;
}
.pane-icons button{
	width: 32px;
	height: 32px;
}
.pane-icons .on{
	border: 1px solid #555;
	border-radius: 4px;
	background-color: #fff;
}
.notch{
	display: flex;
	height: 10px;
}
.notch i{
	flex: 1;
	border-bottom: 1px solid #ccc;
}
.pane-body{
	display: flex;
	flex: 1;
	min-height: 0;
	overflow: hidden;
}
.options{
	flex: 1;
	overflow: hidden;
}
.options h2{
	display: flex;
	align-items: center;
	gap: 6px;
	height: 32px;
	padding-left: 7px;
	font-size: 11px;
	font-weight: bold;
}
.radios{
	margin-left: 22px;
	padding: 3px 0 4px;
	border-bottom: 1px solid #d0d0d0;
}
.radios label{
	display: flex;
	align-items: center;
	gap: 6px;
	height: 22px;
}
.radios input{
	appearance: none;
	width: 12px;
	height: 12px;
	margin: 0 0 2px;
	border: 1px solid #888;
	border-radius: 50%;
	background-color: #fff;
}
.radios input:checked{
	border: 3px solid #107c50;
}
.color-row{
	display: flex;
	align-items: center;
	justify-content: space-between;
	height: 42px;
	margin: 0 0 3px 32px;
}
.color-row button{
	gap: 7px;
	width: 46px;
	height: 30px;
	padding-left: 4px;
	border: 1px solid #888;
	border-radius: 4px;
	background-color: #fff;
}
.pane .vscroll{
	width: 22px;
	padding: 9px 0 5px;
}
.pane .vscroll .bar{
	flex: 0 1 182px;
	margin-bottom: auto;
}

/* status bar */
.status{
	display: flex;
	align-items: center;
	height: 23px;
	padding: 0 18px 0 12px;
	background-color: #f6f6f6;
	border-radius: 0 0 8px 8px;
	font-family: "Open Sans", sans-serif;
	font-size: 11px;
}
.status > svg{
	margin: 0 4px 0 18px;
}
.status b{
	font-weight: 600;
}
.views{
	display: flex;
	align-self: stretch;
	margin-left: auto;
}
.views button{
	width: 40px;
}
.views .on{
	background-color: #e2e2e2;
}
.views svg, .zoom svg{
	fill: none;
	stroke: #333;
}
.zoom{
	display: flex;
	align-items: center;
	gap: 5px;
	padding-left: 6px;
}
.zoom span{
	margin-left: 8px;
}
.zoom input{
	appearance: none;
	width: 100px;
	height: 12px;
	margin: 0;
	background: linear-gradient(#777, #777) center / 100% 1px no-repeat;
}
.zoom input::-webkit-slider-thumb{
	appearance: none;
	width: 5px;
	height: 11px;
	background-color: #666;
}
```
FILE: script.js
```js
var rows = document.getElementById('rows'),
	COLUMNS = 12,
	LAST_ROW = 24;

function addCells(row, count){
	for(var index = 0; index < count; index++){
		row.appendChild(document.createElement('td'));
	}
}

// fill the data rows up to the last column
for(var index = 0; index < rows.children.length; index++){
	var dataRow = rows.children[index];
	addCells(dataRow, COLUMNS + 1 - dataRow.children.length);
}

// empty rows below the data
for(var number = rows.children.length + 1; number <= LAST_ROW; number++){
	var emptyRow = document.createElement('tr');
	var header = document.createElement('th');
	header.textContent = number;
	emptyRow.appendChild(header);
	addCells(emptyRow, COLUMNS);
	rows.appendChild(emptyRow);
}
```
